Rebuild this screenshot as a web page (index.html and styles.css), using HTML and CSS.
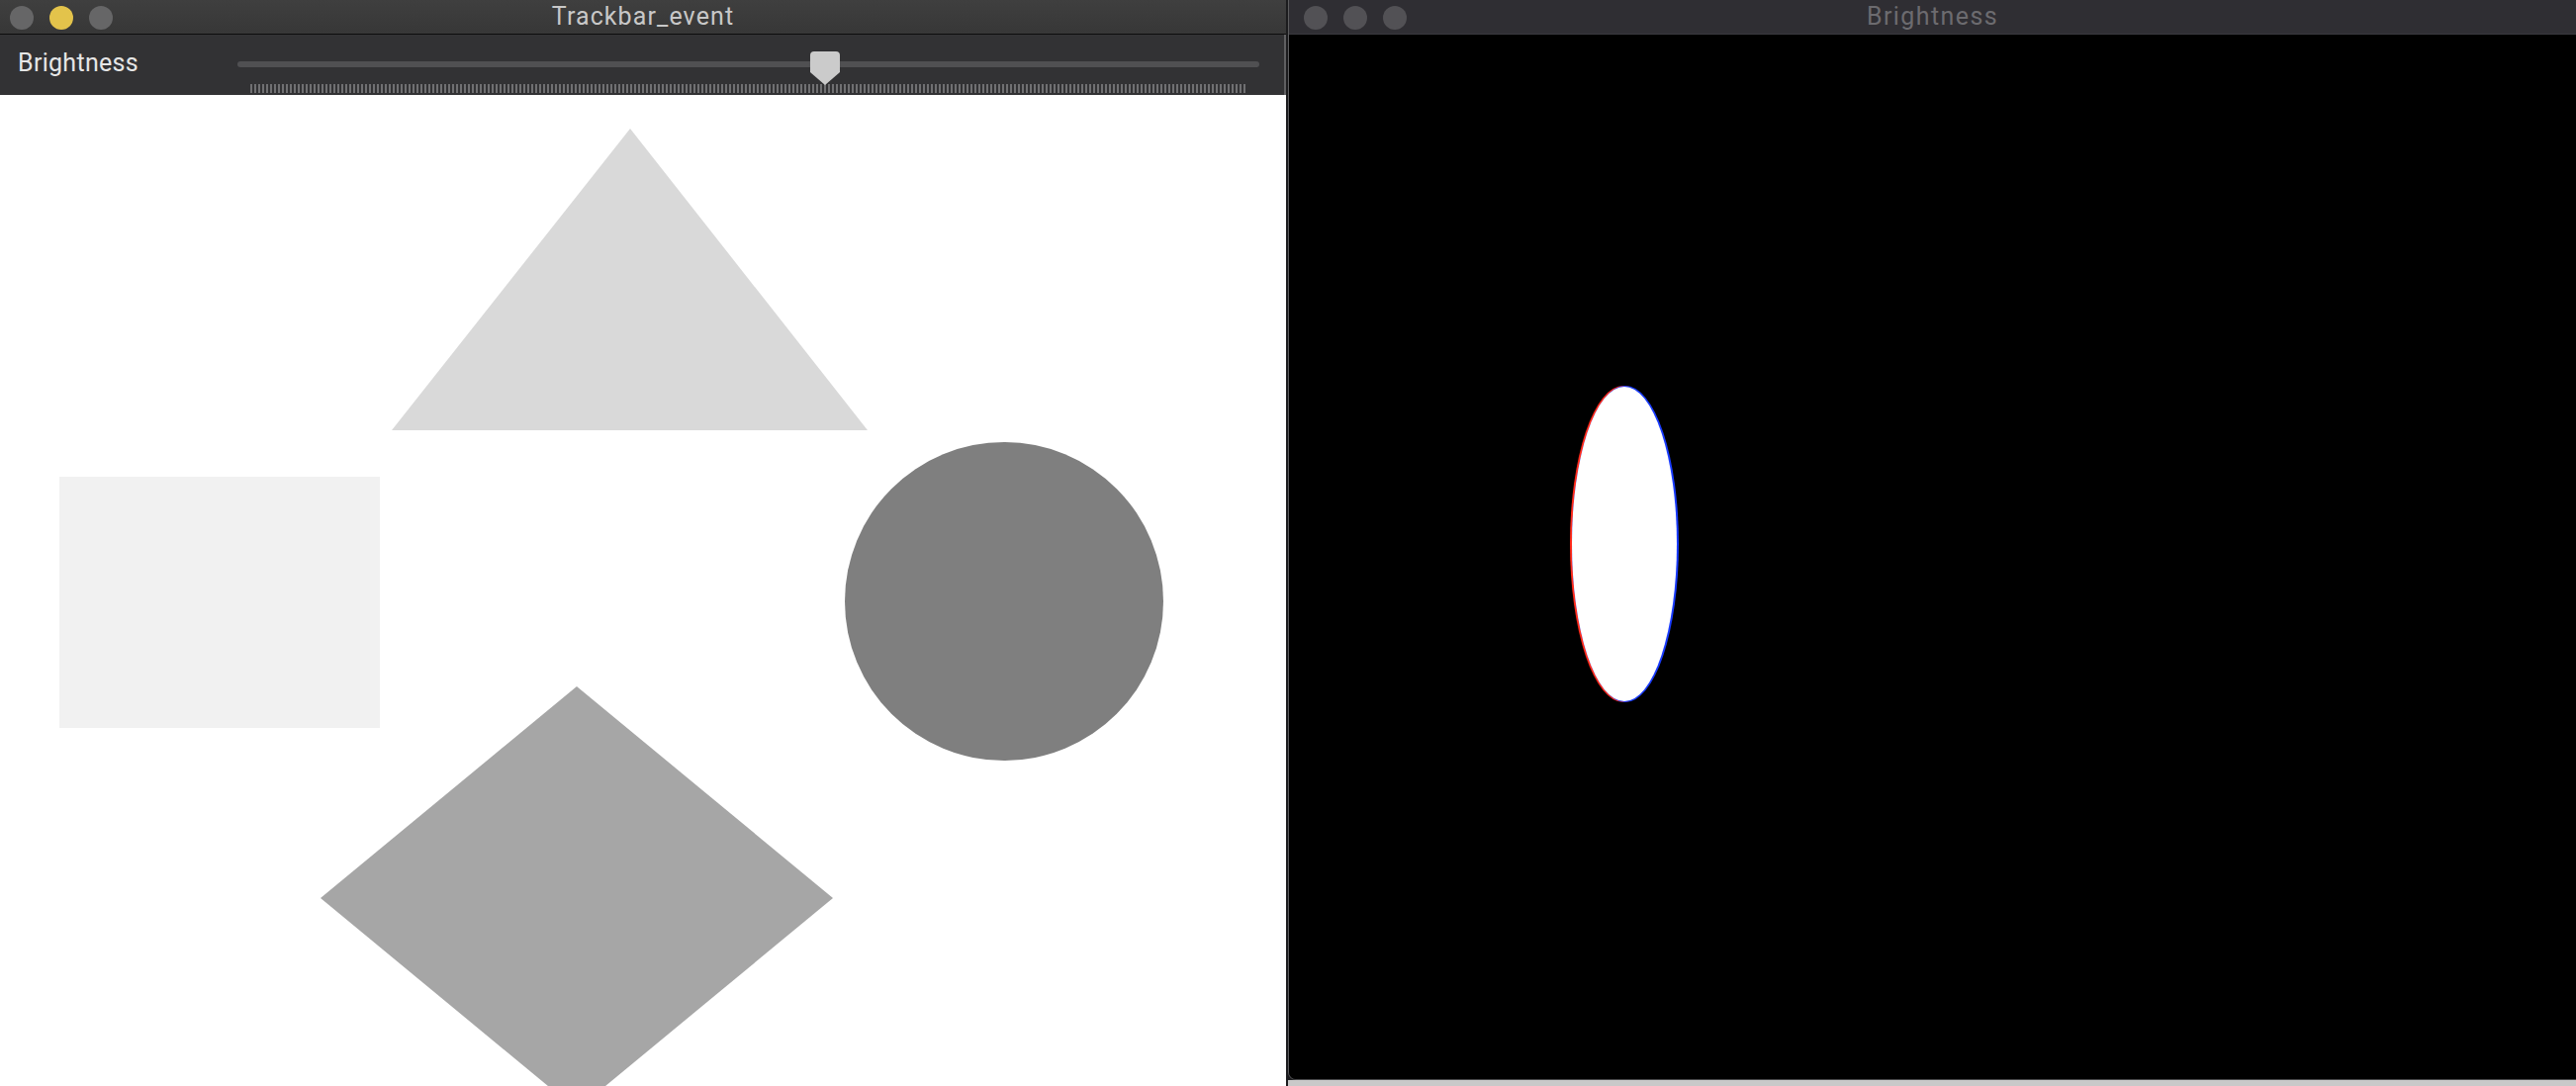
FILE: index.html
```html
<!DOCTYPE html>
<html>
<head>
<meta charset="utf-8">
<link rel="stylesheet" href="styles.css">
</head>
<body>
  <div class="win win-left">
    <div class="titlebar titlebar-active">
      <div class="lights">
        <span class="light light-gray"></span>
        <span class="light light-yellow"></span>
        <span class="light light-gray"></span>
      </div>
      <div class="title">Trackbar_event</div>
      <div></div>
    </div>
    <div class="toolbar">
      <div class="tb-label">Brightness</div>
      <div class="slider">
        <div class="track"></div>
        <div class="ticks"></div>
        <svg class="thumb" width="30" height="34" viewBox="0 0 30 34"><path d="M4 0 H26 Q30 0 30 4 V21 L15 34 L0 21 V4 Q0 0 4 0 Z" fill="#cbcbcb"/></svg>
      </div>
    </div>
    <div class="canvas canvas-white">
      <svg class="scene" width="1300" height="1002" viewBox="0 0 1300 1002">
        <polygon points="637,34 396,339 877,339" fill="#d9d9d9"/>
        <rect x="60" y="386" width="324" height="254" fill="#f1f1f1"/>
        <circle cx="1015" cy="512" r="161" fill="#7f7f7f"/>
        <polygon points="583,598 842,812 583,1026 324,812" fill="#a6a6a6"/>
      </svg>
    </div>
  </div>
  <div class="right-col">
    <div class="win win-right">
      <div class="titlebar titlebar-inactive">
        <div class="lights">
          <span class="light light-dim"></span>
          <span class="light light-dim"></span>
          <span class="light light-dim"></span>
        </div>
        <div class="title title-dim">Brightness</div>
        <div></div>
      </div>
      <div class="canvas canvas-black">
        <svg class="scene" width="1301" height="1057" viewBox="0 0 1301 1057">
          <ellipse cx="338" cy="515" rx="54" ry="160" fill="#ff2a1a"/>
          <ellipse cx="340" cy="515" rx="54" ry="160" fill="#1a3cff"/>
          <ellipse cx="339" cy="515" rx="53" ry="159" fill="#ffffff"/>
        </svg>
      </div>
    </div>
    <div class="desk-strip"></div>
  </div>
</body>
</html>
```
FILE: styles.css
```css
html, body {
  margin: 0;
  padding: 0;
}
body {
  width: 2604px;
  height: 1098px;
  overflow: hidden;
  display: flex;
  gap: 2px;
  background: #1c1c1e;
  font-family: Roboto, "Liberation Sans", sans-serif;
}
.win {
  display: flex;
  flex-direction: column;
  overflow: hidden;
}
.win-left {
  width: 1300px;
  flex: none;
  height: 1098px;
}
.titlebar {
  height: 34px;
  flex: none;
  display: grid;
  grid-template-columns: 1fr auto 1fr;
  align-items: center;
}
.titlebar-active {
  background: linear-gradient(#3f3f3f, #373737);
  border-bottom: 1px solid #0d0d0d;
}
.titlebar-inactive {
  background: #2f2e33;
  border-bottom: 1px solid #3a393e;
}
.lights {
  display: flex;
  gap: 16px;
  padding-left: 10px;
  padding-top: 2px;
}
.right-col .lights {
  padding-left: 15px;
}
.light {
  width: 24px;
  height: 24px;
  border-radius: 50%;
  display: block;
}
.light-gray { background: #666667; }
.light-yellow { background: #e3c34b; }
.light-dim { background: #525155; }
.title {
  font-size: 25px;
  color: #c8c8c8;
  letter-spacing: 1.1px;
  padding-bottom: 2px;
}
.title-dim {
  color: #6c6b6f;
  letter-spacing: 1.4px;
}
.toolbar {
  height: 61px;
  flex: none;
  background: #323234;
  display: flex;
  border-right: 2px solid #5f5f61;
}
.tb-label {
  width: 222px;
  padding-left: 18px;
  padding-top: 14px;
  font-size: 25px;
  letter-spacing: 0.3px;
  color: #e6e6e6;
  flex: none;
}
.slider {
  position: relative;
  width: 1033px;
  flex: none;
}
.track {
  margin-top: 27px;
  height: 6px;
  border-radius: 3px;
  background: #505052;
}
.ticks {
  margin-top: 17px;
  margin-left: 13px;
  width: 1007px;
  height: 9px;
  background: repeating-linear-gradient(90deg, #707072 0 2px, transparent 2px 4px);
}
.thumb {
  position: absolute;
  left: 579px;
  top: 17px;
  display: block;
}
.canvas {
  flex: 1;
  position: relative;
  overflow: hidden;
}
.canvas-white { background: #ffffff; }
.canvas-black { background: #000000; }
.scene {
  display: block;
}
.right-col {
  flex: 1;
  display: flex;
  flex-direction: column;
}
.win-right {
  height: 1092px;
  flex: none;
  border-left: 1px solid #5c5c5e;
  border-bottom: 1px solid #48484a;
  border-bottom-left-radius: 8px;
  box-sizing: border-box;
}
.desk-strip {
  flex: 1;
  background: #c9c9c9;
}
```
